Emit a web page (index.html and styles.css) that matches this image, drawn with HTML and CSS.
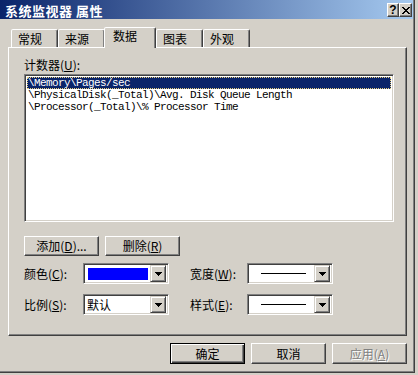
FILE: index.html
```html
<!DOCTYPE html>
<html>
<head>
    <meta charset="utf-8">
    <title>系统监视器 属性</title>
    <link rel="stylesheet" href="styles.css">
</head>
<body>
    <div class="window">
        <div class="frame">
            <div class="titlebar">
                <span class="title">系统监视器 属性</span>
                <div class="caption-buttons">
                    <span class="cap-btn help">?</span>
                    <span class="cap-btn close">
                        <svg width="8" height="7" viewBox="0 0 8 7" shape-rendering="crispEdges">
                            <path d="M0 0h2v1h-2zM6 0h2v1h-2zM1 1h2v1h-2zM5 1h2v1h-2zM2 2h4v1h-4zM3 3h2v1h-2zM2 4h4v1h-4zM1 5h2v1h-2zM5 5h2v1h-2zM0 6h2v1h-2zM6 6h2v1h-2z" fill="#000"/>
                        </svg>
                    </span>
                </div>
            </div>

            <div class="client">
                <!-- tab strip -->
                <div class="tabs">
                    <span class="tab">常规</span>
                    <span class="tab">来源</span>
                    <span class="tab selected">数据</span>
                    <span class="tab">图表</span>
                    <span class="tab">外观</span>
                </div>

                <div class="panel">
                    <div class="label">计数器(<u>U</u>):</div>
                    <div class="listbox">
                        <div class="item selected">\Memory\Pages/sec</div>
                        <div class="item">\PhysicalDisk(_Total)\Avg. Disk Queue Length</div>
                        <div class="item">\Processor(_Total)\% Processor Time</div>
                    </div>

                    <div class="list-buttons">
                        <span class="btn">添加(<u>D</u>)...</span>
                        <span class="btn">删除(<u>R</u>)</span>
                    </div>

                    <div class="props">
                        <span class="prop-label">颜色(<u>C</u>):</span>
                        <div class="combo">
                            <div class="combo-value"><span class="swatch"></span></div>
                            <span class="drop"><svg width="7" height="4" shape-rendering="crispEdges"><path d="M0 0h7v1h-7zM1 1h5v1h-5zM2 2h3v1h-3zM3 3h1v1h-1z" fill="#000"/></svg></span>
                        </div>
                        <span class="prop-label right">宽度(<u>W</u>):</span>
                        <div class="combo">
                            <div class="combo-value line"><span class="stroke"></span></div>
                            <span class="drop"><svg width="7" height="4" shape-rendering="crispEdges"><path d="M0 0h7v1h-7zM1 1h5v1h-5zM2 2h3v1h-3zM3 3h1v1h-1z" fill="#000"/></svg></span>
                        </div>

                        <span class="prop-label">比例(<u>S</u>):</span>
                        <div class="combo">
                            <div class="combo-value text">默认</div>
                            <span class="drop"><svg width="7" height="4" shape-rendering="crispEdges"><path d="M0 0h7v1h-7zM1 1h5v1h-5zM2 2h3v1h-3zM3 3h1v1h-1z" fill="#000"/></svg></span>
                        </div>
                        <span class="prop-label right">样式(<u>E</u>):</span>
                        <div class="combo">
                            <div class="combo-value line"><span class="stroke"></span></div>
                            <span class="drop"><svg width="7" height="4" shape-rendering="crispEdges"><path d="M0 0h7v1h-7zM1 1h5v1h-5zM2 2h3v1h-3zM3 3h1v1h-1z" fill="#000"/></svg></span>
                        </div>
                    </div>
                </div>

                <div class="actions">
                    <span class="btn default">确定</span>
                    <span class="btn">取消</span>
                    <span class="btn disabled">应用(<u>A</u>)</span>
                </div>
            </div>
        </div>
    </div>
</body>
</html>
```

FILE: styles.css
```css
body { margin: 0; background: #d4d0c8; font-family: "Noto Sans CJK SC", "Liberation Sans", sans-serif; font-size: 12px; color: #000; }
u { text-decoration: underline; text-underline-offset: 1px; }

.window { width: 415px; height: 373px; box-sizing: border-box; border-right: 1px solid #404040; border-bottom: 1px solid #404040; }
.frame { height: 100%; box-sizing: border-box; border-right: 1px solid #808080; border-bottom: 1px solid #808080; display: flex; flex-direction: column; }

.titlebar { height: 19px; display: flex; align-items: center; justify-content: space-between; padding: 0 1px 0 5px; background: linear-gradient(to right, #0a246a, #a6caf0); }
.title { color: #fff; font-weight: bold; font-size: 13px; letter-spacing: 0.5px; line-height: 13px; padding-top: 2px; }
.caption-buttons { display: flex; padding-top: 1px; }
.cap-btn { width: 10px; height: 12px; display: flex; align-items: center; justify-content: center; background: #d4d0c8; border: 1px solid; border-color: #fff #404040 #404040 #fff; box-shadow: inset -1px -1px #808080; font: bold 12px "Liberation Sans", sans-serif; line-height: 12px; }
.cap-btn.close { width: 11px; }

.client { flex: 1; display: flex; flex-direction: column; padding: 8px 6px 0 8px; }

.tabs { display: flex; align-items: flex-end; height: 20px; padding-left: 3px; position: relative; z-index: 1; }
.tab { width: 39px; height: 17px; padding-left: 6px; line-height: 18px; border: 1px solid; border-bottom: none; border-color: #fff #404040 transparent #fff; box-shadow: inset -1px 0 #808080; border-radius: 2px 2px 0 0; background: #d4d0c8; }
.tab.selected { width: 42px; height: 20px; padding-left: 8px; line-height: 16px; margin-left: -1px; margin-bottom: -1px; }

.panel { width: 399px; height: 289px; box-sizing: border-box; border: 1px solid; border-color: #fff #404040 #404040 #fff; box-shadow: inset -1px -1px #808080; padding: 11px 12px 0 15px; }

.label { line-height: 12px; height: 12px; margin-bottom: 3px; }

.listbox { width: 370px; height: 148px; box-sizing: border-box; background: #fff; border: 1px solid; border-color: #808080 #fff #fff #808080; box-shadow: inset 1px 1px #404040, inset -1px -1px #d4d0c8; padding: 2px 2px 0 2px; font-family: "Liberation Mono", monospace; font-size: 11px; letter-spacing: -0.6px; }
.item { height: 12px; line-height: 12px; padding-left: 1px; white-space: pre; }
.item.selected { background: #0a246a; color: #fff; outline: 1px dotted #e8d080; outline-offset: -1px; }

.list-buttons { display: flex; gap: 6px; margin-top: 14px; }
.btn { width: 75px; height: 20px; box-sizing: border-box; display: flex; align-items: center; justify-content: center; border: 1px solid; border-color: #fff #404040 #404040 #fff; box-shadow: inset -1px -1px #808080; line-height: 12px; }

.props { display: grid; grid-template-columns: 59px 86px 21px 57px 86px; row-gap: 10px; margin-top: 7px; align-items: center; }
.prop-label { line-height: 12px; grid-column: 1; }
.prop-label.right { grid-column: 4; }

.combo { height: 21px; box-sizing: border-box; display: flex; background: #fff; border: 1px solid; border-color: #808080 #fff #fff #808080; box-shadow: inset 1px 1px #404040, inset -1px -1px #d4d0c8; padding: 2px; }
.combo-value { flex: 1; display: flex; align-items: center; }
.swatch { margin: 1px 2px 0 2px; flex: 1; height: 12px; background: #0000ff; }
.combo-value.line { justify-content: center; padding-left: 2px; }
.stroke { width: 45px; height: 1px; background: #000; }
.combo-value.text { padding-left: 1px; line-height: 12px; }
.drop { width: 16px; height: 17px; box-sizing: border-box; margin: -1px 0; display: flex; align-items: center; justify-content: center; background: #d4d0c8; border: 1px solid; border-color: #d4d0c8 #404040 #404040 #d4d0c8; box-shadow: inset 1px 1px #fff, inset -1px -1px #808080; }
.drop svg { margin-top: 1px; }

.actions { display: flex; justify-content: flex-end; gap: 6px; margin-top: 7px; }
.actions .btn { height: 21px; }
.btn.default { border: 1px solid #000; box-shadow: inset 1px 1px #fff, inset -1px -1px #404040, inset -2px -2px #808080; }
.btn.disabled { color: #808080; text-shadow: 1px 1px #fff; }
```
